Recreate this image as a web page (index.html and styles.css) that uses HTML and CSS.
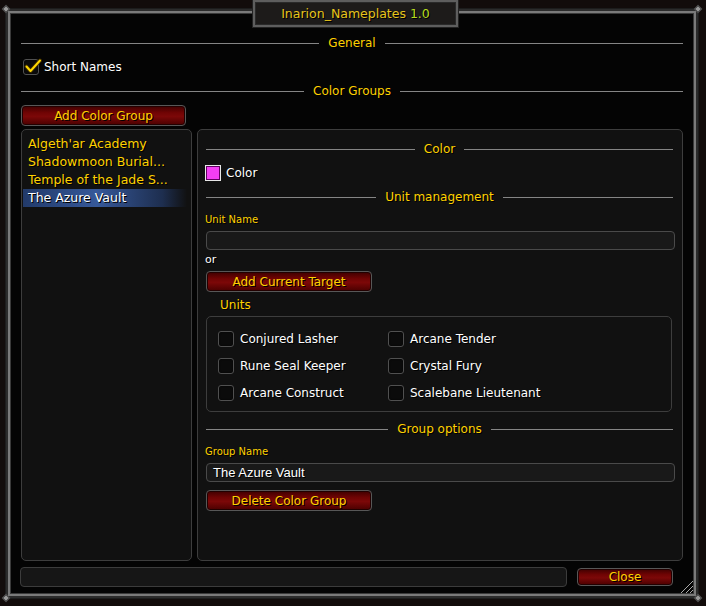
FILE: index.html
```html
<!DOCTYPE html>
<html lang="en">
<head>
    <meta charset="UTF-8">
    <meta name="viewport" content="width=device-width, initial-scale=1.0">
    <title>Inarion_Nameplates</title>
    <link rel="stylesheet" href="styles.css">
</head>
<body>
    <div class="frame">
        <div class="title"><span class="addon">Inarion_Nameplates</span> <span class="version">1.0</span></div>
        <span class="bolt bolt-tl"></span>
        <span class="bolt bolt-tr"></span>
        <span class="bolt bolt-bl"></span>
        <span class="bolt bolt-br"></span>

        <div class="heading"><span>General</span></div>
        <div class="option option-main">
            <span class="check">
                <svg class="tick" viewBox="0 0 18 16"><path class="tick-shadow" d="M2.5 8.5 L6.5 13 L16 2.5"/><path class="tick-mark" d="M2.5 8.5 L6.5 13 L16 2.5"/></svg>
            </span>
            <span>Short Names</span>
        </div>

        <div class="heading"><span>Color Groups</span></div>
        <button class="btn btn-add">Add Color Group</button>

        <div class="groups">
            <ul class="tree">
                <li>Algeth'ar Academy</li>
                <li>Shadowmoon Burial...</li>
                <li>Temple of the Jade S...</li>
                <li class="selected">The Azure Vault</li>
            </ul>

            <div class="detail">
                <div class="heading"><span>Color</span></div>
                <div class="option swatch-row">
                    <span class="swatch"></span>
                    <span>Color</span>
                </div>

                <div class="heading"><span>Unit management</span></div>
                <div class="field-label">Unit Name</div>
                <div class="input"></div>
                <div class="or">or</div>
                <button class="btn btn-wide">Add Current Target</button>

                <div class="group-title">Units</div>
                <div class="units">
                    <div class="option"><span class="check"></span><span>Conjured Lasher</span></div>
                    <div class="option"><span class="check"></span><span>Arcane Tender</span></div>
                    <div class="option"><span class="check"></span><span>Rune Seal Keeper</span></div>
                    <div class="option"><span class="check"></span><span>Crystal Fury</span></div>
                    <div class="option"><span class="check"></span><span>Arcane Construct</span></div>
                    <div class="option"><span class="check"></span><span>Scalebane Lieutenant</span></div>
                </div>

                <div class="heading"><span>Group options</span></div>
                <div class="field-label">Group Name</div>
                <div class="input">The Azure Vault</div>
                <button class="btn btn-wide">Delete Color Group</button>
            </div>
        </div>

        <div class="statusbar">
            <div class="status"></div>
            <button class="btn btn-close">Close</button>
        </div>

        <svg class="grip" viewBox="0 0 16 16">
            <path d="M2 14 L14 2 M7 14 L14 7 M11 14 L14 11"/>
        </svg>
    </div>
</body>
</html>
```

FILE: styles.css
```css
* {
    box-sizing: border-box;
}
html, body {
    margin: 0;
    height: 100%;
}
body {
    background: #120c0b;
    padding: 9px 8px 8px 6px;
    font-family: "DejaVu Sans", sans-serif;
    font-size: 12px;
    color: #fff;
    text-shadow: 1px 1px 0 #000;
}

/* outer window */
.frame {
    position: relative;
    height: 100%;
    display: flex;
    flex-direction: column;
    padding: 23px 13px 9px;
    background: #040404;
    border: 2px solid #2b2b2b;
    box-shadow: inset 0 0 0 2px #7a7a7a, inset 0 0 0 3px #3a3a3a, 0 0 0 1px #1c1c1c;
}
.title {
    position: absolute;
    top: -11px;
    left: 245px;
    width: 205px;
    height: 27px;
    line-height: 23px;
    text-align: center;
    font-size: 12.5px;
    background: #1d1b1a;
    border: 2px solid #5e5e5e;
    box-shadow: inset 0 0 0 1px #2a2a2a, 0 0 0 1px #222;
}
.addon {
    color: #e6c41c;
}
.version {
    color: #b4dc1e;
}
.bolt {
    position: absolute;
    width: 6px;
    height: 6px;
    background: #9a9a9a;
    border: 1px solid #333;
    transform: rotate(45deg);
}
.bolt-tl { top: -5px; left: -5px; }
.bolt-tr { top: -5px; right: -5px; }
.bolt-bl { bottom: -5px; left: -5px; }
.bolt-br { bottom: -5px; right: -5px; }

/* section headings with rules on both sides */
.heading {
    display: flex;
    align-items: center;
    gap: 9px;
    height: 18px;
    color: #ffd100;
}
.heading::before,
.heading::after {
    content: "";
    flex: 1;
    height: 1px;
    background: #858585;
}

.option {
    display: flex;
    align-items: center;
    gap: 6px;
}
.option-main {
    height: 30px;
    padding-left: 2px;
    gap: 5px;
}
.check {
    position: relative;
    width: 16px;
    height: 16px;
    flex: none;
    border: 1px solid #505050;
    border-radius: 3px;
    background: #0b0b0b;
    box-shadow: inset 0 0 2px #000;
}
.tick {
    position: absolute;
    left: 0;
    top: -2px;
    width: 18px;
    height: 16px;
    fill: none;
    stroke-linecap: round;
    stroke-linejoin: round;
}
.tick-shadow {
    stroke: #3a2a00;
    stroke-width: 4;
}
.tick-mark {
    stroke: #ffd800;
    stroke-width: 2;
}

.btn {
    display: block;
    height: 21px;
    padding: 0;
    font-family: "DejaVu Sans", sans-serif;
    font-size: 12px;
    color: #ffd100;
    text-shadow: 1px 1px 0 #000;
    border: 1px solid #575757;
    border-radius: 4px;
    background: linear-gradient(#3e0000, #700404 35%, #7c0808 55%, #4a0000);
    box-shadow: inset 0 0 0 1px #220000;
}
.btn-add {
    width: 165px;
    margin-top: 5px;
}
.btn-wide {
    width: 166px;
}

/* tree + detail panels */
.groups {
    flex: 1;
    display: flex;
    gap: 5px;
    margin-top: 3px;
}
.tree,
.detail,
.units {
    border: 1px solid #3d3d3d;
    border-radius: 5px;
    background: #111;
}
.tree {
    width: 171px;
    margin: 0;
    padding: 5px 4px 0 1px;
    list-style: none;
    font-size: 12.5px;
    color: #ffd100;
}
.tree li {
    height: 18px;
    line-height: 18px;
    padding-left: 5px;
    white-space: nowrap;
}
.tree li.selected {
    color: #fff;
    background: linear-gradient(90deg, rgba(40, 72, 135, 0.75), rgba(58, 96, 168, 0.9) 45%, rgba(40, 70, 130, 0.55) 85%, rgba(20, 30, 60, 0));
}

.detail {
    flex: 1;
    padding: 10px 7px 0 8px;
}
.detail .heading {
    margin-right: 2px;
}
.swatch-row {
    height: 18px;
    margin: 6px 0;
    margin-left: -1px;
    gap: 5px;
}
.swatch {
    width: 16px;
    height: 16px;
    border: 1px solid #e8e8e8;
    background: #f43ef4;
    box-shadow: inset 0 0 0 1px #600060;
}
.field-label {
    height: 14px;
    line-height: 14px;
    margin-top: 7px;
    font-size: 10px;
    color: #ffd100;
    margin-left: -1px;
}
.input {
    height: 19px;
    margin-top: 4px;
    padding-left: 6px;
    line-height: 17px;
    font-family: "Liberation Sans", Arial, sans-serif;
    font-size: 13px;
    border: 1px solid #4a4a4a;
    border-radius: 4px;
    background: #191919;
}
.or {
    height: 16px;
    line-height: 16px;
    margin-top: 2px;
    font-size: 11px;
    margin-left: -1px;
}
.detail .btn-wide {
    margin-top: 3px;
}
.detail .btn-wide:last-child {
    margin-top: 8px;
}
.group-title {
    height: 16px;
    line-height: 16px;
    margin-top: 5px;
    padding-left: 14px;
    color: #ffd100;
}
.units {
    height: 96px;
    margin: 3px 3px 8px 0;
    padding: 8px 0 0 11px;
    display: grid;
    grid-template-columns: 170px 1fr;
    grid-auto-rows: 27px;
}

/* bottom bar */
.statusbar {
    display: flex;
    align-items: center;
    gap: 10px;
    height: 20px;
    margin-top: 6px;
    padding-right: 10px;
}
.status {
    flex: 1;
    height: 20px;
    margin-left: -1px;
    border: 1px solid #3c3c3c;
    border-radius: 4px;
    background: #161616;
}
.btn-close {
    width: 96px;
    height: 18px;
    line-height: 15px;
}
.grip {
    position: absolute;
    right: 1px;
    bottom: 1px;
    width: 16px;
    height: 16px;
    stroke: #a8a8a8;
    stroke-width: 1;
}
```
